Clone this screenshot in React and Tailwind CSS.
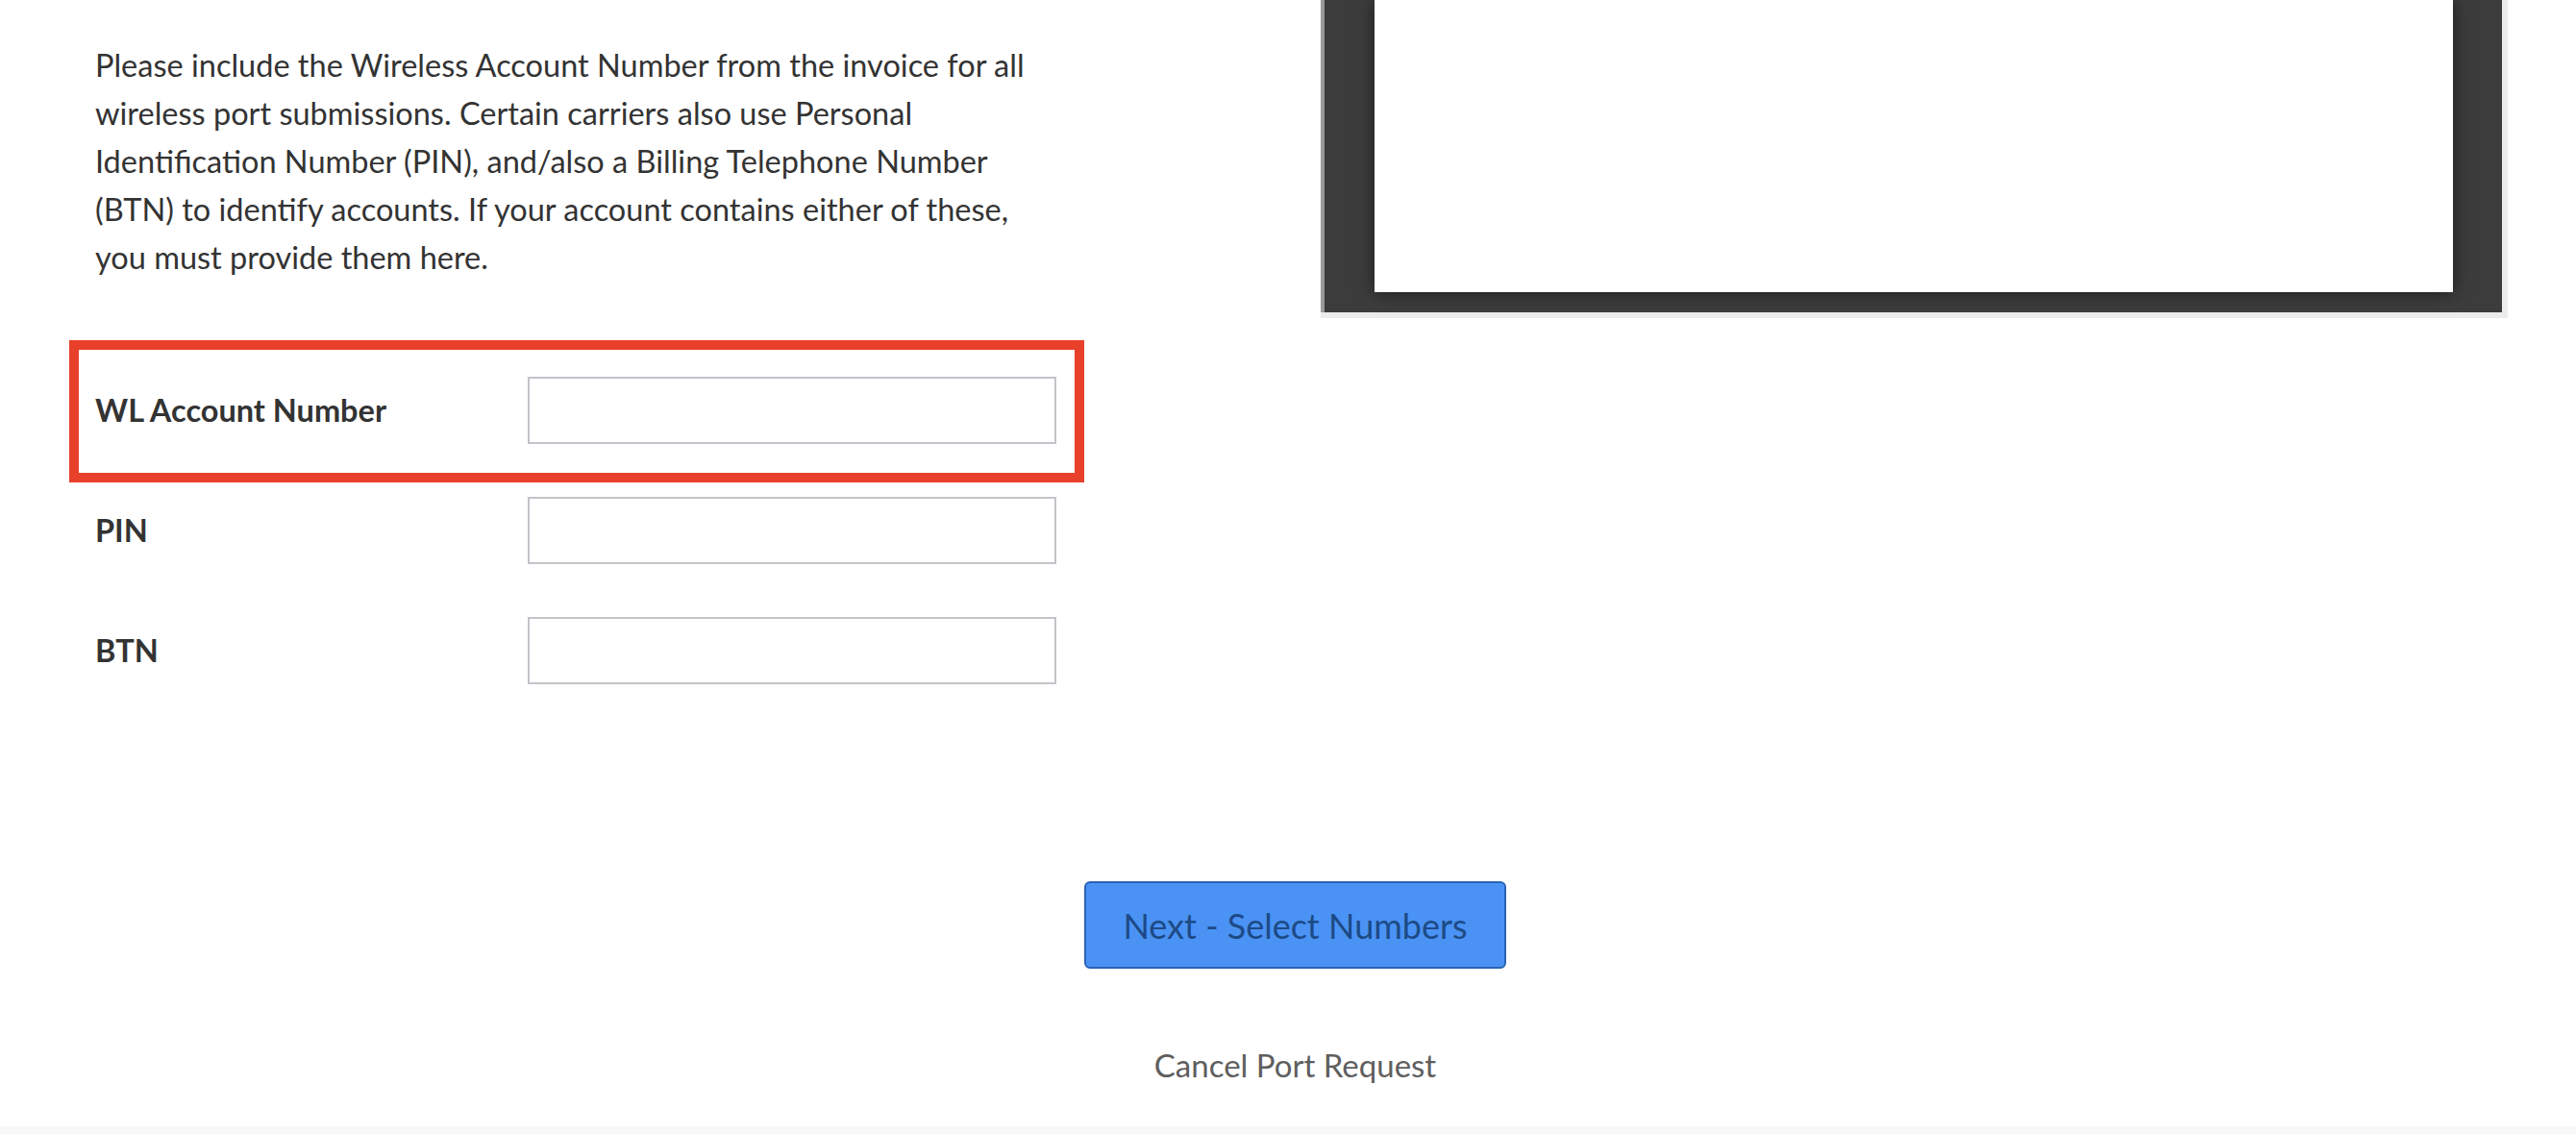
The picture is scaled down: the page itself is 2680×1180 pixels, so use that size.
export default function App() {
  return (
    <main className="relative flex h-[1180px] w-full flex-col overflow-hidden bg-white font-['Lato','Liberation_Sans',sans-serif] text-[#333333]">
      <div className="flex items-start">
        <div className="w-[1374px] shrink-0 pl-[99px] pt-[43px]">
          <p className="w-[1000px] text-[32.5px] leading-[50px]">
            Please include the Wireless Account Number from the invoice for all wireless port submissions. Certain carriers also use Personal Identification Number (PIN), and/also a Billing Telephone Number (BTN) to identify accounts. If your account contains either of these, you must provide them here.
          </p>

          <div className="mt-[99px] flex flex-col gap-[55px]">
            <FieldRow label="WL Account Number" />
            <FieldRow label="PIN" />
            <FieldRow label="BTN" />
          </div>
        </div>

        <div className="shrink-0 bg-[#ececec] pb-[6px] pr-[6px]">
          <div className="border-l-4 border-[#9a9a9a] bg-[#3c3c3c] pb-[21px] pl-[52px] pr-[51px]">
            <div className="h-[304px] w-[1122px] bg-white shadow-[0_0_16px_rgba(0,0,0,0.55)]" />
          </div>
        </div>
      </div>

      {/* annotation box drawn over the first row */}
      <div className="absolute left-[72px] top-[354px] h-[148px] w-[1056px] border-[10px] border-[#e8402a]" />

      <div className="mt-[205px] flex flex-col items-center pl-[15px]">
        <button className="h-[91px] w-[439px] rounded-[6px] border-2 border-[#2a62b5] bg-[#4a93f5] text-[36px] text-[#1d4a86]">
          Next - Select Numbers
        </button>
        <a className="mt-[80px] text-[33px] leading-[40px] text-[#5e5e5e]">Cancel Port Request</a>
      </div>

      <div className="mt-auto h-[8px] bg-[#f8f8f8]" />
    </main>
  )
}

function FieldRow({ label }) {
  return (
    <div className="flex items-center">
      <label className="w-[450px] text-[32.5px] font-bold">{label}</label>
      <input type="text" className="h-[70px] w-[550px] border-2 border-[#c3c3c9] bg-white px-3 text-[30px] outline-none" />
    </div>
  )
}
